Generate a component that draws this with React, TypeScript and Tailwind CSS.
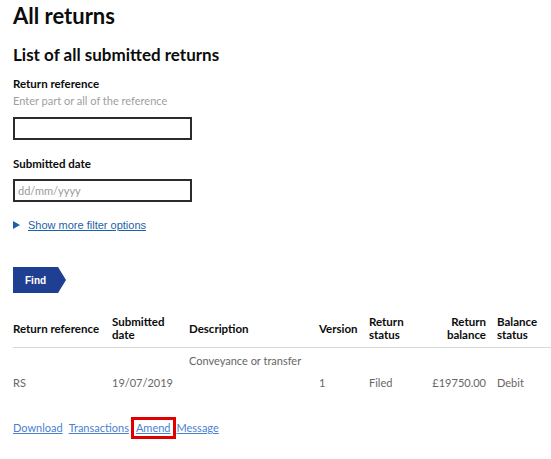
import React from "react";

const cols = "grid grid-cols-[99px_77px_130px_50px_61px_67px_1fr]";

export default function App() {
  return (
    <div className="min-h-screen bg-white pl-[13px] text-[#0b0c0c] font-['Lato','Open_Sans',sans-serif]">
      {/* Headings */}
      <h1 className="pt-[3px] text-[22px] font-bold leading-[26px]">All returns</h1>
      <h2 className="mt-[15px] text-[17px] font-bold leading-[22px]">List of all submitted returns</h2>

      {/* Return reference filter */}
      <div className="mt-[10px]">
        <div className="text-[11.5px] font-bold leading-[16px]">Return reference</div>
        <div className="mt-[1px] text-[11px] leading-[16px] text-[#a0a0a0]">Enter part or all of the reference</div>
        <input
          type="text"
          className="mt-[8px] block h-[23px] w-[179px] border-2 border-[#2b2b2b] px-[4px] text-[11px] outline-none"
        />
      </div>

      {/* Submitted date filter */}
      <div className="mt-[16px]">
        <div className="text-[11.5px] font-bold leading-[16px]">Submitted date</div>
        <input
          type="text"
          placeholder="dd/mm/yyyy"
          className="mt-[7px] block h-[23px] w-[179px] border-2 border-[#2b2b2b] px-[3px] text-[11px] outline-none placeholder:text-[#9a9a9a]"
        />
      </div>

      {/* More filters */}
      <div className="mt-[16px] flex items-center gap-[8px] font-['Liberation_Sans',Arial,sans-serif]">
        <svg width="7" height="8" viewBox="0 0 7 8">
          <path d="M0 0 L7 4 L0 8 Z" fill="#1d5fa8" />
        </svg>
        <a href="#" className="text-[11px] leading-[14px] text-[#1d5fa8] underline">
          Show more filter options
        </a>
      </div>

      {/* Find button */}
      <div className="mt-[35px] flex">
        <button className="flex h-[26px] items-center bg-[#1f3f93] pl-[12px] pr-[12px] text-[10px] font-bold text-white font-['Liberation_Sans',Arial,sans-serif]">
          Find
        </button>
        <svg width="8" height="26" viewBox="0 0 8 26" className="block">
          <path d="M0 0 L8 13 L0 26 Z" fill="#1f3f93" />
        </svg>
      </div>

      {/* Table */}
      <div className="mt-[22px] text-[11.5px]">
        <div className={`${cols} items-center border-b border-[#d8d8d8] pb-[6px] font-bold leading-[13px]`}>
          <div>Return reference</div>
          <div>Submitted<br />date</div>
          <div>Description</div>
          <div>Version</div>
          <div>Return<br />status</div>
          <div className="pr-[11px] text-right">Return<br />balance</div>
          <div>Balance<br />status</div>
        </div>
        <div className={`${cols} items-end pt-[2px] text-[11px] leading-[22px] text-[#666666]`}>
          <div>RS</div>
          <div>19/07/2019</div>
          <div className="flex flex-col">
            <span>Conveyance or transfer</span>
            <span>&nbsp;</span>
          </div>
          <div>1</div>
          <div>Filed</div>
          <div className="pr-[11px] text-right">£19750.00</div>
          <div>Debit</div>
        </div>
      </div>

      {/* Row actions */}
      <div className="mt-[23px] flex items-center text-[11px] leading-[14px] text-[#4a7fd4]">
        <a href="#" className="underline">Download</a>
        <a href="#" className="ml-[6px] underline">Transactions</a>
        <span className="ml-[2px] border-[3px] border-[#e00000] px-[2px] py-[1px]">
          <a href="#" className="underline">Amend</a>
        </span>
        <a href="#" className="ml-[1px] underline">Message</a>
      </div>
    </div>
  );
}
